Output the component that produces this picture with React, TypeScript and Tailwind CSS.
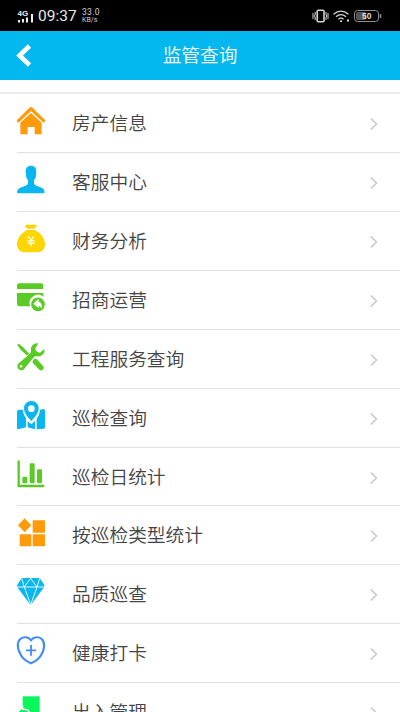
import type { ReactNode } from "react";

type Item = { label: string; icon: ReactNode };

const items: Item[] = [
  {
    label: "房产信息",
    icon: (
      <g fill="#ff9a0a">
        <path d="M0 39 L39 1 Q42 -1 45 1 L84 39 V44 Q81 48 77 45 L42 12 L7 45 Q3 48 0 44Z" />
        <path d="M42 18 L74 47 V80 Q74 82 72 82 H53 V60 H32 V82 H12 Q10 82 10 80 V47 Z" />
      </g>
    ),
  },
  {
    label: "客服中心",
    icon: (
      <path
        fill="#09b6ef"
        d="M42 -1 C53 -1 58 6 58 16 L57 30 C56 36 54 39 51 42 V52 C52 58 60 60 68 63 C78 66 82 70 83 79 Q83 82 79 82 H4 Q0 82 0 79 C1 70 6 66 16 63 C24 60 32 58 33 52 V42 C30 39 28 36 27 30 L26 16 C26 6 31 -1 42 -1Z"
      />
    ),
  },
  {
    label: "财务分析",
    icon: (
      <>
        <path
          fill="#fdd500"
          d="M26 0 Q34 -3 42 0 Q50 -3 58 0 Q61 3 57 6 L52 11 H32 L26 6 Q22 3 26 0Z M31 15 H53 C70 22 84 41 84 57 C84 74 74 82 60 82 H24 C10 82 0 74 0 57 C0 41 14 22 31 15Z"
        />
        <path d="M33 34 L42 45 L51 34 M42 45 V64 M31 47 H53 M31 55 H53" fill="none" stroke="#fff9cf" strokeWidth="4.500" />
      </>
    ),
  },
  {
    label: "招商运营",
    icon: (
      <g fill="#5acb25">
        <path d="M7 -2 H72 Q79 -2 79 5 V15 H0 V5 Q0 -2 7 -2Z" />
        <path d="M0 27 H79 V38 A25 25 0 0 0 40 67 H7 Q0 67 0 60Z" />
        <circle cx="63" cy="61" r="20.500" />
        <path d="M49 59 L65 44 V53 C73 55 77 62 73 74 C71 68 69 66 65 66 V73Z" fill="#fff" />
      </g>
    ),
  },
  {
    label: "工程服务查询",
    icon: (
      <g>
        <path d="M1 6 Q2 2 7 4 L20 14 L39 35 L32 40 L11 20Z" fill="#5acb25" />
        <path d="M55 56 L72 74" stroke="#5acb25" strokeWidth="16" strokeLinecap="round" />
        <path
          d="M64 1 C52 -2 40 8 42 22 Q43 28 38 33 L5 61 C-1 67 0 75 5 79 C11 84 18 82 22 77 L49 44 Q54 39 61 40 C74 42 85 31 82 18 L69 29 Q57 29 55 16Z"
          fill="#5acb25"
          stroke="#fff"
          strokeWidth="3"
          paintOrder="stroke"
        />
        <circle cx="12" cy="70" r="4" fill="#fff" />
      </g>
    ),
  },
  {
    label: "巡检查询",
    icon: (
      <g fill="#09b6ef">
        <path d="M5 23 H17 C19 36 24 45 27 49 V76 L3 82 Q0 82 0 78 V29 Q0 25 5 23Z" />
        <path d="M32 58 L43 67 L54 57 V82 L32 76Z" />
        <path d="M69 23 L80 21 Q84 21 84 26 V76 Q84 79 80 80 L59 82 V50 C64 43 68 35 69 23Z" />
        <path
          fillRule="evenodd"
          d="M43 -3 C56 -3 65 7 65 19 C65 33 54 46 43 57 C32 46 21 33 21 19 C21 7 30 -3 43 -3Z M43 10 A10 10 0 1 0 43 30 A10 10 0 1 0 43 10Z"
        />
      </g>
    ),
  },
  {
    label: "巡检日统计",
    icon: (
      <g fill="#5acb25">
        <path d="M5 1 V75 H79" fill="none" stroke="#5acb25" strokeWidth="7" strokeLinecap="round" strokeLinejoin="round" />
        <rect x="16" y="47" width="15" height="20" rx="4" />
        <rect x="38" y="7" width="15" height="60" rx="4" />
        <rect x="60" y="25" width="15" height="42" rx="4" />
      </g>
    ),
  },
  {
    label: "按巡检类型统计",
    icon: (
      <g fill="#ff9a0a">
        <path d="M23 -2 L43 19 L23 40 L3 19Z" />
        <rect x="47" y="4" width="37" height="37" rx="2" />
        <rect x="8" y="46" width="35" height="36" rx="2" />
        <rect x="47" y="46" width="37" height="36" rx="2" />
      </g>
    ),
  },
  {
    label: "品质巡查",
    icon: (
      <g fill="#09b6ef">
        <path d="M14 0 H68 L82 21 Q83 25 80 29 L43 79 Q41 81 39 79 L2 29 Q-1 25 1 21Z" />
        <path d="M0 27 H82 M14 1 L22 27 L41 80 L60 27 L68 1 M22 27 L41 1 L60 27" fill="none" stroke="#e6faff" strokeWidth="3" />
      </g>
    ),
  },
  {
    label: "健康打卡",
    icon: (
      <g fill="none" stroke="#438cf5">
        <path
          strokeWidth="6.500"
          strokeLinejoin="round"
          d="M42 10 C35 -1 19 -2 10 6 C-2 17 2 38 11 53 C17 64 29 73 42 79 C55 73 67 64 73 53 C82 38 86 17 74 6 C65 -2 49 -1 42 10Z"
        />
        <path strokeWidth="5.500" d="M42 24 V56 M27 40 H57" />
      </g>
    ),
  },
  {
    label: "出入管理",
    icon: (
      <g>
        <path fill="#08f75c" d="M17 1 H68 V84 H17Z" />
        <path fill="#08f75c" stroke="#fff" strokeWidth="4" d="M-3 53 L17 33 V40 C29 39 37 43 39 54 V84 H0Z" />
      </g>
    ),
  },
];

function StatusBar() {
  return (
    <div className="flex h-[31px] items-center bg-black pl-[17px] pr-[18px] text-[#e8e8e8]">
      <svg className="mr-1 h-[18px] w-[17px]" viewBox="0 0 17 18" fill="#eeeeee">
        <text x="0.500" y="8.500" fontFamily="Liberation Sans, sans-serif" fontSize="8" fontWeight="700">4G</text>
        <path d="M1 13h2v2.500H1zM5 12h2v3.500H5zM9 10.500h2v5H9zM14 7h2v8.500h-2z" />
      </svg>
      <span className="w-[44px] font-[Roboto,sans-serif] text-[15.500px] leading-[18px]">09:37</span>
      <span className="flex w-[20px] flex-col font-[Roboto,sans-serif] text-[#d0d0d0]">
        <span className="text-[8.500px] leading-[8px] tracking-[0.300px]">33.0</span>
        <span className="text-[7px] leading-[8px]">KB/s</span>
      </span>
      <svg className="ml-auto h-4 w-[70px]" viewBox="0 0 70 16" fill="none" stroke="#d4d4d4">
        <rect x="5.200" y="2.200" width="6.800" height="11.600" rx="1" strokeWidth="1.600" />
        <path d="M3.200 4v3l-1 1 1 1v3M14 4v3l1 1-1 1v3M1 5v6M16 5v6" strokeWidth="1" />
        <path d="M21.500 6.200Q29 0 36.500 6.200M24 8.800Q29 4.500 34 8.800M26.500 11.200Q29 9 31.500 11.200" strokeWidth="1.300" />
        <path d="M28 12.500h2v1.500h-2zM35 11.500h2v2h-2z" fill="#ddd" stroke="none" />
        <rect x="42.500" y="2.500" width="24" height="11" rx="3" stroke="#909090" />
        <rect x="44" y="4" width="10" height="8" rx="1.500" fill="#555555" stroke="none" />
        <path d="M68.500 6v4" stroke="#909090" strokeWidth="1.500" />
        <text x="50" y="11" fontFamily="Liberation Sans, sans-serif" fontSize="8.500" fontWeight="700" fill="#dddddd" stroke="none">50</text>
      </svg>
    </div>
  );
}

export default function App() {
  return (
    <div className="h-[712px] w-[400px] overflow-hidden bg-white font-['Noto_Sans_CJK_SC',sans-serif]">
      <StatusBar />
      <header className="grid h-[49px] grid-cols-[1fr_auto_1fr] items-center bg-[#03b7ef] text-white">
        <button className="ml-[16px] w-4" aria-label="返回">
          <svg className="block h-[24px] w-[16px]" viewBox="0 0 16 24" fill="none" stroke="#fff" strokeWidth="4.600">
            <path d="M13.500 2 L3.500 11.500 L13.500 21" />
          </svg>
        </button>
        <h1 className="mb-[3px] text-[18.700px] font-[350] leading-[24px]">监管查询</h1>
      </header>
      <div className="h-[14px] border-b-2 border-[#ededed]" />
      <ul>
        {items.map(({ label, icon }) => (
          <li key={label} className="ml-[16.600px] flex h-[58.930px] border-b border-[#e0e0e0]">
            <svg className="mt-[13px] h-7 w-7 shrink-0 overflow-visible" viewBox="0 0 84 84">
              {icon}
            </svg>
            <span className="ml-[27.500px] mt-[14px] whitespace-nowrap text-[18.700px] font-[350] leading-[28px] text-[#444444]">{label}</span>
            <svg className="ml-auto mr-[22.500px] mt-[24px] h-[12px] w-[7.500px]" viewBox="0 0 7.500 12" fill="none" stroke="#c4c4c4" strokeWidth="1.300">
              <path d="M0.800 0.600 L6.600 6 L0.800 11.400" />
            </svg>
          </li>
        ))}
      </ul>
    </div>
  );
}
